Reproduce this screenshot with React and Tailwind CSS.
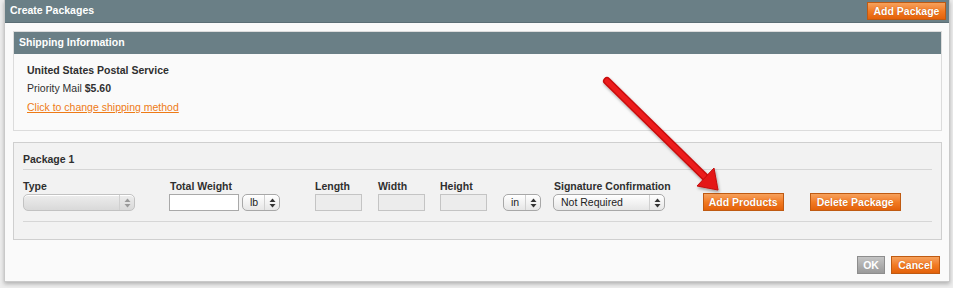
import React from 'react';

const font = { fontFamily: '"Liberation Sans", Arial, Helvetica, sans-serif' };

function Arrows({ color = '#333' }) {
  return (
    <svg width="7" height="10" viewBox="0 0 7 10" className="block">
      <path d="M3.5 0.5 L6.5 4 L0.5 4 Z" fill={color} />
      <path d="M3.5 9.5 L6.5 6 L0.5 6 Z" fill={color} />
    </svg>
  );
}

function MacSelect({ width, label, disabled }) {
  const bg = disabled
    ? 'from-[#ededed] to-[#d9d9d9] border-[#c2c2c2]'
    : 'from-[#ffffff] to-[#e6e6e6] border-[#a8a8a8]';
  return (
    <div
      className={`flex items-stretch h-[17px] rounded-[5px] border bg-gradient-to-b shadow-[inset_0_1px_0_#fff] ${bg} ${width}`}
    >
      <div className={`flex-1 flex items-center pl-[7px] text-[10.5px] leading-none whitespace-nowrap ${disabled ? 'text-[#999]' : 'text-[#222]'}`}>
        {label}
      </div>
      <div className="w-[15px] flex items-center justify-center border-l border-[#d0d0d0]">
        <Arrows color={disabled ? '#999' : '#333'} />
      </div>
    </div>
  );
}

function OrangeButton({ children, className = '' }) {
  return (
    <button
      className={`h-[18px] px-0 whitespace-nowrap flex items-center justify-center border border-[#bf5a12] bg-gradient-to-b from-[#f6a15b] via-[#f27b22] to-[#e36109] text-white text-[10.5px] font-bold leading-none [text-shadow:0_0_1px_#b54a00] ${className}`}
    >
      {children}
    </button>
  );
}

export default function App() {
  return (
    <div className="relative w-[953px] h-[288px] bg-[#ededed] overflow-hidden" style={font}>
      <div className="ml-[4px] w-[946px] h-[282px] bg-[#fafafa] border-l border-r border-b border-[#c9c9c9] shadow-[0_2px_4px_rgba(0,0,0,0.25)] flex flex-col">
        {/* title bar */}
        <div className="h-[23px] bg-[#6a7f86] border-b border-[#5b6e75] flex items-center justify-between pl-[5px] pr-[3px]">
          <span className="text-white text-[10.5px] font-bold">Create Packages</span>
          <OrangeButton className="w-[79px]">Add Package</OrangeButton>
        </div>

        <div className="px-[8px] pt-[8px] flex flex-col">
          {/* shipping information */}
          <div className="w-[929px] border border-[#dcdcdc] bg-[#fafafa]">
            <div className="h-[22px] bg-[#6a7f86] flex items-center pl-[5px]">
              <span className="text-white text-[10.5px] font-bold">Shipping Information</span>
            </div>
            <div className="pl-[13px] pt-[7px] pb-[14px] text-[10.5px] leading-[18px] text-[#2f2f2f]">
              <div className="font-bold">United States Postal Service</div>
              <div>
                Priority Mail <span className="font-bold">$5.60</span>
              </div>
              <div className="pt-[1px]">
                <a className="text-[#ee7a16] underline">Click to change shipping method</a>
              </div>
            </div>
          </div>

          {/* package */}
          <div className="mt-[11px] w-[929px] h-[98px] border border-[#cfcfcf] bg-[#f2f2f2] px-[9px]">
            <div className="pt-[9px] pb-[3px] leading-[14px] text-[10.5px] font-bold text-[#2f2f2f]">Package 1</div>
            <div className="border-t border-[#d6d6d6]" />
            <div className="flex items-end pt-[9px] pb-[10px] text-[10.5px] text-[#2f2f2f]">
              <div className="flex flex-col">
                <span className="font-bold leading-[14px] mb-[1px]">Type</span>
                <MacSelect width="w-[112px]" label="" disabled />
              </div>
              <div className="flex flex-col ml-[34px]">
                <span className="font-bold leading-[14px] mb-[1px] pl-[1px]">Total Weight</span>
                <div className="flex">
                  <div className="w-[70px] h-[17px] bg-white border border-[#a9a9a9]" />
                  <div className="ml-[3px]">
                    <MacSelect width="w-[38px]" label="lb" />
                  </div>
                </div>
              </div>
              <div className="flex flex-col ml-[35px]">
                <span className="font-bold leading-[14px] mb-[1px]">Length</span>
                <div className="w-[47px] h-[17px] bg-[#ececec] border border-[#c4c4c4]" />
              </div>
              <div className="flex flex-col ml-[16px]">
                <span className="font-bold leading-[14px] mb-[1px]">Width</span>
                <div className="w-[47px] h-[17px] bg-[#ececec] border border-[#c4c4c4]" />
              </div>
              <div className="flex flex-col ml-[15px]">
                <span className="font-bold leading-[14px] mb-[1px]">Height</span>
                <div className="w-[47px] h-[17px] bg-[#ececec] border border-[#c4c4c4]" />
              </div>
              <div className="ml-[16px]">
                <MacSelect width="w-[38px]" label="in" />
              </div>
              <div className="flex flex-col ml-[12px]">
                <span className="font-bold leading-[14px] mb-[1px] pl-[1px]">Signature Confirmation</span>
                <MacSelect width="w-[112px]" label="Not Required" />
              </div>
              <OrangeButton className="ml-[32px] w-[81px]">Add Products</OrangeButton>
              <OrangeButton className="ml-[26px] w-[91px]">Delete Package</OrangeButton>
            </div>
            <div className="border-t border-[#d6d6d6]" />
          </div>

          {/* footer */}
          <div className="flex justify-end gap-[6px] pt-[16px] pr-[1px]">
            <button className="h-[18px] w-[28px] flex items-center justify-center border border-[#8d8d8d] bg-gradient-to-b from-[#c4c4c4] to-[#9a9a9a] text-white text-[10.5px] font-bold leading-none">
              OK
            </button>
            <OrangeButton className="w-[49px]">Cancel</OrangeButton>
          </div>
        </div>
      </div>

      {/* red annotation arrow */}
      <svg className="absolute left-0 top-0 pointer-events-none" width="953" height="288" viewBox="0 0 953 288">
        <defs>
          <filter id="sh" x="-20%" y="-20%" width="140%" height="140%">
            <feDropShadow dx="1" dy="2" stdDeviation="1.5" floodColor="#000" floodOpacity="0.35" />
          </filter>
        </defs>
        <g filter="url(#sh)">
          <line x1="607" y1="81" x2="706" y2="178" stroke="#c80d0d" strokeWidth="8" strokeLinecap="round" />
          <line x1="607" y1="81" x2="706" y2="178" stroke="#ec1c1c" strokeWidth="5" strokeLinecap="round" />
          <polygon points="718,190 697,186 714,168" fill="#e41616" stroke="#c20c0c" strokeWidth="1" strokeLinejoin="round" />
        </g>
      </svg>
    </div>
  );
}
